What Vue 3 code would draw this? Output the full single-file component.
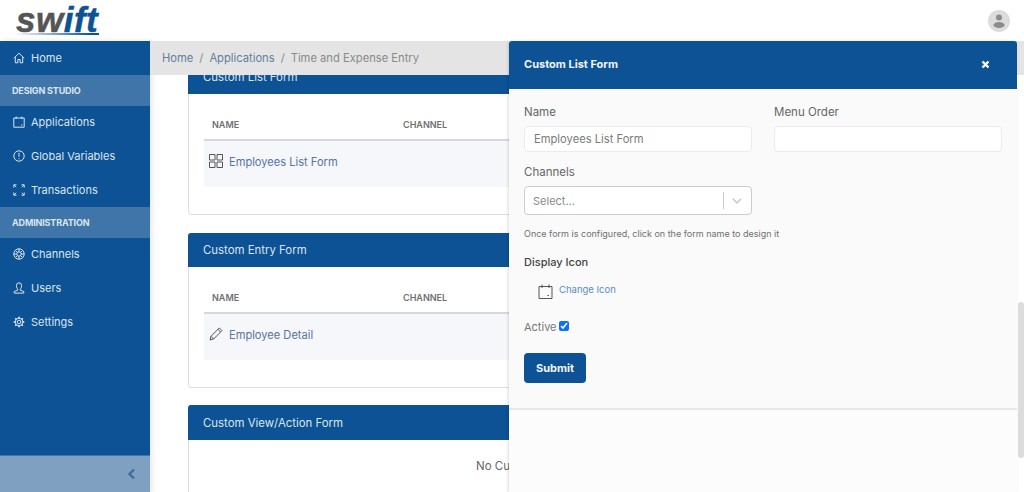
<script setup>
const menuA = [{ t: 'Applications', i: 'cal' }, { t: 'Global Variables', i: 'info' }, { t: 'Transactions', i: 'expand' }]
const menuB = [{ t: 'Channels', i: 'ring' }, { t: 'Users', i: 'user' }, { t: 'Settings', i: 'gear' }]
const teeth = [0, 45, 90, 135, 180, 225, 270, 315]
</script>

<template>
  <div class="app">
    <header class="top">
      <div class="logo">
        <div class="word"><span class="g">sw</span><span class="b">ift</span></div>
        <div class="swoosh"></div>
      </div>
      <div class="avatar">
        <svg width="22" height="22" viewBox="0 0 22 22"><circle cx="11" cy="11" r="11" fill="#dcdcdc"/><circle cx="11" cy="7.5" r="3" fill="#8b8b8b"/><ellipse cx="11" cy="15" rx="5.6" ry="3" fill="#8b8b8b"/></svg>
      </div>
    </header>

    <div class="body">
      <aside class="side">
        <a class="item">
          <svg class="ico" viewBox="0 0 12 12"><path d="M.8 6.200 6 1.200l5.200 5M2.300 5.200v5.600h2.600V7.500h2.200v3.300h2.600V5.200"/></svg>Home
        </a>
        <div class="sec">DESIGN STUDIO</div>
        <a v-for="m in menuA" :key="m.t" class="item">
          <svg class="ico" viewBox="0 0 12 12">
            <template v-if="m.i === 'cal'"><path d="M.8 2h10.400v9.200H.8zM3.200.6V3M8.800.6V3"/><path d="M8 9h1.400"/></template>
            <template v-else-if="m.i === 'info'"><circle cx="6" cy="6" r="5.200"/><path d="M6 2.800v4M6 8.300v1"/></template>
            <template v-else><path d="M.8 3.500V.8h2.700M8.500.8h2.700v2.700M.8 8.500v2.700h2.700M8.500 11.200h2.700V8.500M1 1l2.200 2.200M11 1 8.800 3.200M1 11l2.200-2.200M11 11 8.800 8.800"/></template>
          </svg>{{ m.t }}
        </a>
        <div class="sec">ADMINISTRATION</div>
        <a v-for="m in menuB" :key="m.t" class="item">
          <svg class="ico" viewBox="0 0 12 12">
            <template v-if="m.i === 'ring'"><circle cx="6" cy="6" r="5.200"/><circle cx="6" cy="6" r="2.200"/><path d="M2.400 2.400 4.400 4.400M9.600 2.400 7.600 4.400M2.400 9.600l2-2M9.600 9.600l-2-2M.8 6h3M8.200 6h3M6 .8v3M6 8.200v3"/></template>
            <template v-else-if="m.i === 'user'"><path d="M3.400 3.700a2.600 2.900 0 1 1 5.200 0c0 1.700-.9 3-1.300 3.500v1l3.500 1.300v1.600H1.200V9.500l3.500-1.300v-1C4.300 6.700 3.400 5.400 3.400 3.700z"/></template>
            <template v-else><circle cx="6" cy="6" r="1.800"/><circle cx="6" cy="6" r="3.800"/><path v-for="a in teeth" :key="a" d="M6 .7v1.500" stroke-width="1.700" :transform="`rotate(${a} 6 6)`"/></template>
          </svg>{{ m.t }}
        </a>
        <div class="foot">
          <svg width="9" height="12" viewBox="0 0 9 12"><path d="M7 1.500 2.500 6 7 10.500" fill="none" stroke="#3e6c9c" stroke-width="2.400"/></svg>
        </div>
      </aside>

      <main class="main">
        <nav class="crumb">
          <span class="c1">Home</span><span class="sl">/</span><span class="c1">Applications</span><span class="sl">/</span><span class="c2">Time and Expense Entry</span>
        </nav>

        <section class="card c-list">
          <div class="card-h">Custom List Form</div>
          <div class="tbl">
            <div class="th"><span class="col">NAME</span><span>CHANNEL</span></div>
            <div class="tr">
              <svg class="row-ico" viewBox="0 0 14 14" width="14" height="14"><path d="M.5.500h5.500v5.500H.5zM8 .5h5.500v5.500H8zM.5 8h5.500v5.500H.5zM8 8h5.500v5.500H8z"/></svg>
              <span>Employees List Form</span>
            </div>
          </div>
        </section>

        <section class="card c-entry">
          <div class="card-h">Custom Entry Form</div>
          <div class="tbl">
            <div class="th"><span class="col">NAME</span><span>CHANNEL</span></div>
            <div class="tr">
              <svg class="row-ico" viewBox="0 0 14 14" width="14" height="14"><path d="M10.300.9l2.700 2.700L4.700 12 1 13l1-3.700zM8.900 2.300l2.700 2.700M2 9.300 4.700 12"/></svg>
              <span>Employee Detail</span>
            </div>
          </div>
        </section>

        <section class="card c-view">
          <div class="card-h tall">Custom View/Action Form</div>
          <div class="empty">No Custom View/Action Form</div>
        </section>
      </main>
    </div>

    <aside class="panel">
      <div class="p-h"><span>Custom List Form</span>
        <svg width="9" height="9" viewBox="0 0 9 9"><path d="M1.500 1.500l6 6M7.500 1.500l-6 6" stroke="#fff" stroke-width="2.400" fill="none"/></svg>
      </div>
      <form class="p-b" @submit.prevent>
        <div class="grid">
          <label class="fld"><span class="lb">Name</span><input class="inp" value="Employees List Form"></label>
          <label class="fld"><span class="lb">Menu Order</span><input class="inp"></label>
        </div>
        <div class="fld sel-f"><span class="lb">Channels</span>
          <div class="sel"><span class="ph">Select...</span><i class="div"></i>
            <svg width="10" height="6" viewBox="0 0 10 6"><path d="M.8.800 5 5l4.200-4.200" fill="none" stroke="#c4c4c4" stroke-width="1.300"/></svg>
          </div>
        </div>
        <p class="hint">Once form is configured, click on the form name to design it</p>
        <div class="di">Display Icon</div>
        <div class="ci">
          <svg width="15" height="15" viewBox="0 0 15 15" fill="none" stroke="#555" stroke-width="1"><path d="M1 2.500h13v12H1zM4 .5v3.500M11 .5v3.500M9.500 11.500h1.500"/></svg>
          <a>Change Icon</a>
        </div>
        <label class="act">Active<input type="checkbox" checked></label>
        <button class="sub" type="submit">Submit</button>
      </form>
    </aside>
    <div class="thumb"></div>
  </div>
</template>

<style>
html, body { margin: 0; overflow: hidden; background: #fff; }
</style>

<style scoped>
.app { position: relative; width: 1024px; height: 492px; overflow: hidden; font-family: Inter, "Open Sans", sans-serif; font-size: 11px; color: #555; background: #fff; }
.top { height: 41px; box-sizing: border-box; display: flex; justify-content: space-between; align-items: flex-start; padding: 0 14px 0 15px; }
.logo { width: 84px; }
.word { font: italic 700 35px/35px "Liberation Sans", sans-serif; letter-spacing: .5px; -webkit-text-stroke: .5px; height: 33px; padding-top: 2px; box-sizing: border-box; padding-left: 1px; }
.g { color: #555; }
.b { color: #0d5295; }
.swoosh { height: 2px; background: linear-gradient(90deg, #fff, #0d5295 90%); margin-left: -1px; }
.avatar { margin-top: 10px; height: 22px; }

.body { display: flex; height: 451px; }
.side { width: 150px; flex: none; background: #0c5295; display: flex; flex-direction: column; color: #dbe5ef; box-shadow: 2px 0 6px rgba(0,0,0,.1); position: relative; z-index: 1; }
.item { height: 34px; display: flex; align-items: center; gap: 6px; padding-left: 13px; font-size: 11px; flex: none; }
.ico { width: 12px; height: 12px; fill: none; stroke: #dbe5ef; stroke-width: 1; flex: none; }
.sec { height: 31px; flex: none; background: #3f75a8; display: flex; align-items: center; padding-left: 12px; font-size: 9px; font-weight: 700; letter-spacing: -.15px; color: #dbe5ef; box-sizing: border-box; }
.sec + .item { margin-top: -1px; }
.foot { margin-top: auto; height: 37px; background: #7fa0c1; border-top: 1px solid #3f75a8; box-sizing: border-box; display: flex; align-items: center; justify-content: flex-end; padding-right: 14px; }

.main { position: relative; flex: 1; padding: 19px 7px 0 38px; display: flex; flex-direction: column; overflow: hidden; }
.crumb { position: absolute; left: 0; right: 0; top: 0; height: 34px; background: #e4e4e4; display: flex; align-items: center; padding-left: 12px; font-size: 11.200px; z-index: 1; }
.c1 { color: #5f7f9f; }
.c2 { color: #8a8a8a; }
.sl { color: #8a8a8a; margin: 0 6px; }
.card { border: 1px solid #dedede; border-radius: 3px; box-sizing: border-box; flex: none; }
.c-list { height: 155px; }
.c-entry { height: 155px; margin-top: 18px; }
.c-view { height: 120px; margin-top: 17px; }
.card-h { height: 34px; margin: -1px -1px 0; background: #0c5295; color: #dbe5ef; font-size: 11.400px; display: flex; align-items: center; padding-left: 15px; border-radius: 3px 3px 0 0; }
.tall { height: 35px; }
.tbl { margin: 13px 15px 0; }
.th { height: 30px; padding: 2px 0 0 8px; display: flex; align-items: center; font-size: 9px; font-weight: 600; color: #707070; border-bottom: 2px solid #d5d8dd; }
.col { width: 191px; }
.tr { height: 46px; box-sizing: border-box; padding: 13px 0 0 5px; background: #f5f7fb; display: flex; align-items: flex-start; gap: 6px; color: #56749f; font-size: 11.100px; line-height: 14px; }
.tr span { margin-top: 1px; }
.row-ico { fill: none; stroke: #555; stroke-width: 1; flex: none; }
.empty { padding: 19px 0 0 287px; color: #666; white-space: nowrap; font-size: 11.500px; }

.panel { position: absolute; left: 509px; top: 41px; width: 508px; height: 451px; display: flex; flex-direction: column; background: #fcfcfc; box-shadow: -1px 0 3px rgba(0,0,0,.14); z-index: 2; border-radius: 3px 3px 0 0; }
.p-h { height: 48px; flex: none; box-sizing: border-box; background: #0c5295; color: #f1f5f9; font-weight: 700; font-size: 11px; display: flex; align-items: center; justify-content: space-between; padding: 0 27px 2px 15px; border-radius: 3px 3px 0 0; }
.p-b { height: 321px; flex: none; box-sizing: border-box; background: #fafafa; padding: 16px 15px 0; border-bottom: 2px solid #e8e8e8; }
.grid { display: grid; grid-template-columns: 228px 228px; column-gap: 22px; }
.fld { display: block; }
.lb { display: block; color: #666; font-size: 11.500px; line-height: 14px; margin-bottom: 7px; }
.inp { display: block; width: 100%; height: 26px; box-sizing: border-box; border: 1px solid #ebebeb; border-radius: 4px; background: #fff; padding: 0 9px; font: 11.200px Inter, sans-serif; color: #7a7a7a; outline: none; }
.sel-f { margin-top: 13px; width: 228px; }
.sel { height: 29px; box-sizing: border-box; border: 1px solid #ccc; border-radius: 4px; background: #fff; display: flex; align-items: center; padding: 0 9px 0 8px; color: #8a8a8a; }
.ph { flex: 1; }
.div { width: 1px; height: 17px; background: #ccc; margin-right: 8px; }
.hint { margin: 13px 0 0; font-size: 9px; line-height: 11px; color: #707070; }
.di { margin-top: 16px; font-size: 11px; line-height: 14px; font-weight: 500; color: #444; }
.ci { margin: 15px 0 0 14px; display: flex; align-items: flex-start; gap: 6px; height: 16px; }
.ci a { font-size: 9.500px; color: #5b8dbd; line-height: 10px; margin-top: 1px; }
.act { margin-top: 20px; display: flex; align-items: center; gap: 2px; height: 14px; color: #777; font-size: 11px; }
.act input { margin: 0 0 2px; width: 10px; height: 10px; accent-color: #0b6efd; }
.sub { display: block; margin-top: 19px; width: 62px; height: 30px; border: 0; border-radius: 4px; background: #0c5295; color: #f1f5f9; font: 700 11px Inter, sans-serif; }
.thumb { position: absolute; left: 1018px; top: 302px; width: 6px; height: 156px; background: #dcdcdc; border-radius: 3px; z-index: 3; }
</style>
